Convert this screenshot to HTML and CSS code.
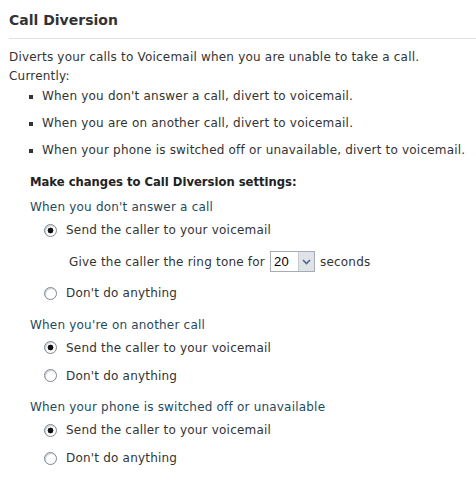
FILE: index.html
```html
<!DOCTYPE html>
<html lang="en">
<head>
    <meta charset="UTF-8">
    <title>Call Diversion</title>
    <link rel="stylesheet" href="styles.css">
</head>
<body>
    <div class="panel">
        <h2>Call Diversion</h2>

        <p class="intro">Diverts your calls to Voicemail when you are unable to take a call.<br>Currently:</p>
        <ul class="current">
            <li>When you don't answer a call, divert to voicemail.</li>
            <li>When you are on another call, divert to voicemail.</li>
            <li>When your phone is switched off or unavailable, divert to voicemail.</li>
        </ul>

        <div class="settings">
            <h3>Make changes to Call Diversion settings:</h3>

            <div class="group">
                <div class="group-title">When you don't answer a call</div>
                <label class="option"><input type="radio" name="noanswer" checked> Send the caller to your voicemail</label>
                <div class="ring">
                    Give the caller the ring tone for
                    <span class="select"><span class="select-value">20</span><span class="select-btn"><svg width="9" height="6" viewBox="0 0 9 6"><path d="M1 1 L4.5 4.5 L8 1" fill="none" stroke="#4a6a8a" stroke-width="1.6"/></svg></span></span>
                    seconds
                </div>
                <label class="option"><input type="radio" name="noanswer"> Don't do anything</label>
            </div>

            <div class="group">
                <div class="group-title">When you're on another call</div>
                <label class="option"><input type="radio" name="busy" checked> Send the caller to your voicemail</label>
                <label class="option"><input type="radio" name="busy"> Don't do anything</label>
            </div>

            <div class="group">
                <div class="group-title">When your phone is switched off or unavailable</div>
                <label class="option"><input type="radio" name="off" checked> Send the caller to your voicemail</label>
                <label class="option"><input type="radio" name="off"> Don't do anything</label>
            </div>
        </div>
    </div>
</body>
</html>
```

FILE: styles.css
```css
body {
    margin: 0;
    padding: 0 0 0 9px;
    background: #fff;
    font-family: "DejaVu Sans", Verdana, sans-serif;
    font-size: 12px;
    letter-spacing: 0.2px;
    color: #333;
}
.panel h2 {
    margin: 0;
    padding: 12px 0 9px 0;
    font-size: 14px;
    line-height: 17px;
    letter-spacing: 0;
    color: #333;
    border-bottom: 1px solid #e2e2e2;
}
.intro {
    margin: 9px 0 0 0;
    line-height: 19px;
}
.current {
    margin: -3px 0 0 0;
    padding: 0 0 0 33px;
    list-style: none;
}
.current li {
    position: relative;
    line-height: 27px;
}
.current li::before {
    content: "";
    position: absolute;
    left: -13px;
    top: 12px;
    width: 4px;
    height: 4px;
    background: #333;
}
.settings {
    padding: 9px 0 0 21px;
}
.settings h3 {
    margin: 0;
    font-size: 11.6px;
    letter-spacing: 0;
    color: #222;
    line-height: 18px;
}
.group {
    margin-top: 7px;
}
.group + .group {
    margin-top: 8.5px;
}
.group-title {
    color: #1f4a5c;
    line-height: 18px;
}
.option {
    display: flex;
    align-items: center;
    gap: 9px;
    margin-left: 14px;
    height: 28px;
}
.option input {
    appearance: none;
    -webkit-appearance: none;
    margin: 0;
    width: 13px;
    height: 13px;
    border: 1px solid #7d8690;
    border-radius: 50%;
    background: #fff;
    box-shadow: inset 1px 1px 1px #c9ced3;
}
.option input:checked {
    background: radial-gradient(circle, #111 0, #111 2.6px, #fff 3.2px);
}
.ring {
    display: flex;
    align-items: center;
    gap: 5px;
    margin-left: 39px;
    height: 35px;
}
.select {
    display: inline-flex;
    height: 19px;
    border: 1px solid #a5acb5;
    background: #fff;
}
.select-value {
    width: 24px;
    padding-left: 3px;
    line-height: 19px;
    font-size: 13px;
    font-family: "Liberation Sans", Arial, sans-serif;
    color: #000;
}
.select-btn {
    width: 15px;
    display: flex;
    align-items: center;
    justify-content: center;
    background: #dfe3e8;
    border-left: 1px solid #c4c9d0;
}
```
